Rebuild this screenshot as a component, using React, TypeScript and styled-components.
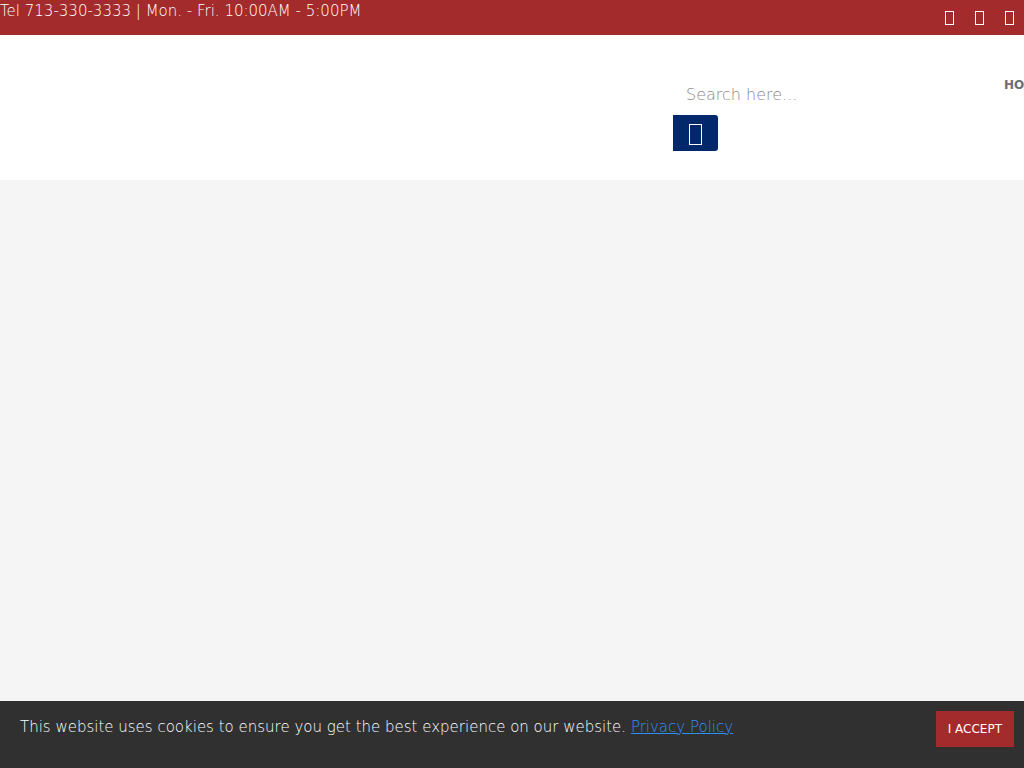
import React from "react";
import styled, { createGlobalStyle } from "styled-components";

const GlobalStyle = createGlobalStyle`
  *, *::before, *::after { box-sizing: border-box; }
  body {
    margin: 0;
    background: #f5f5f5;
    font-family: "DejaVu Sans", sans-serif;
    font-weight: 300;
    font-size: 15px;
    line-height: 22px;
  }
`;

const Page = styled.div`
  display: flex;
  flex-direction: column;
  min-height: 100vh;
  overflow: hidden;
`;

const TopBar = styled.div`
  display: flex;
  justify-content: space-between;
  height: 35px;
  background: #a32b2b;
  color: #fff;
`;

const Contact = styled.p`
  margin: 0;
`;

const SocialLinks = styled.nav`
  display: flex;
`;

const SocialLink = styled.a`
  display: flex;
  align-items: center;
  width: 30px;
  padding-left: 11px;
  color: #fff;
`;

const Header = styled.header`
  display: flex;
  justify-content: flex-end;
  height: 145px;
  padding-top: 39px;
  background: #fff;
`;

const SearchForm = styled.form`
  display: flex;
  flex-direction: column;
  align-items: flex-start;
  width: 331px;
`;

const SearchInput = styled.input`
  width: 240px;
  height: 41px;
  padding: 0 13px;
  border: 0;
  background: transparent;
  color: #495057;
  font: 300 16px/24px "DejaVu Sans", sans-serif;
  &::placeholder { color: #888; opacity: 1; }
`;

const SearchButton = styled.button`
  display: flex;
  align-items: center;
  justify-content: center;
  width: 45px;
  height: 36px;
  padding: 2px 0 0;
  border: 0;
  border-radius: 0 3px 3px 0;
  background: #00286b;
  color: #fff;
`;

const Menu = styled.nav`
  width: 20px;
`;

const MenuLink = styled.a`
  display: block;
  color: #696e73;
  font-weight: 700;
  font-size: 12px;
  text-decoration: none;
`;

const Main = styled.main`
  flex: 1;
`;

const CookieBar = styled.aside`
  display: flex;
  justify-content: space-between;
  align-items: flex-start;
  height: 67px;
  padding: 10px 10px 0 20px;
  background: #303030;
  color: #fff;
`;

const CookieText = styled.p`
  margin: 0;
  padding-top: 5px;
`;

const PolicyLink = styled.a`
  color: #318ffa;
  text-decoration: underline;
`;

const AcceptButton = styled.button`
  height: 36px;
  padding: 0 12px;
  border: 0;
  background: #a32b2b;
  color: #fff;
  font: 400 12px/18px "DejaVu Sans", sans-serif;
`;

function Glyph({ width, height }: { width: number; height: number }) {
  return (
    <svg width={width} height={height} aria-hidden="true">
      <rect x="0.5" y="0.5" width={width - 1} height={height - 1} fill="none" stroke="currentColor" />
    </svg>
  );
}

const networks = ["Facebook", "Twitter", "Instagram"];

export default function App() {
  return (
    <Page>
      <GlobalStyle />
      <TopBar>
        <Contact>Tel 713-330-3333 | Mon. - Fri. 10:00AM - 5:00PM</Contact>
        <SocialLinks>
          {networks.map((name) => (
            <SocialLink key={name} href="#" aria-label={name}>
              <Glyph width={9} height={14} />
            </SocialLink>
          ))}
        </SocialLinks>
      </TopBar>
      <Header>
        <SearchForm onSubmit={(e) => e.preventDefault()}>
          <SearchInput type="text" placeholder="Search here..." aria-label="Search" />
          <SearchButton type="submit" aria-label="Submit search">
            <Glyph width={13} height={21} />
          </SearchButton>
        </SearchForm>
        <Menu>
          <MenuLink href="#">HO</MenuLink>
        </Menu>
      </Header>
      <Main />
      <CookieBar>
        <CookieText>
          This website uses cookies to ensure you get the best experience on our website.{" "}
          <PolicyLink href="#">Privacy Policy</PolicyLink>
        </CookieText>
        <AcceptButton type="button">I ACCEPT</AcceptButton>
      </CookieBar>
    </Page>
  );
}
